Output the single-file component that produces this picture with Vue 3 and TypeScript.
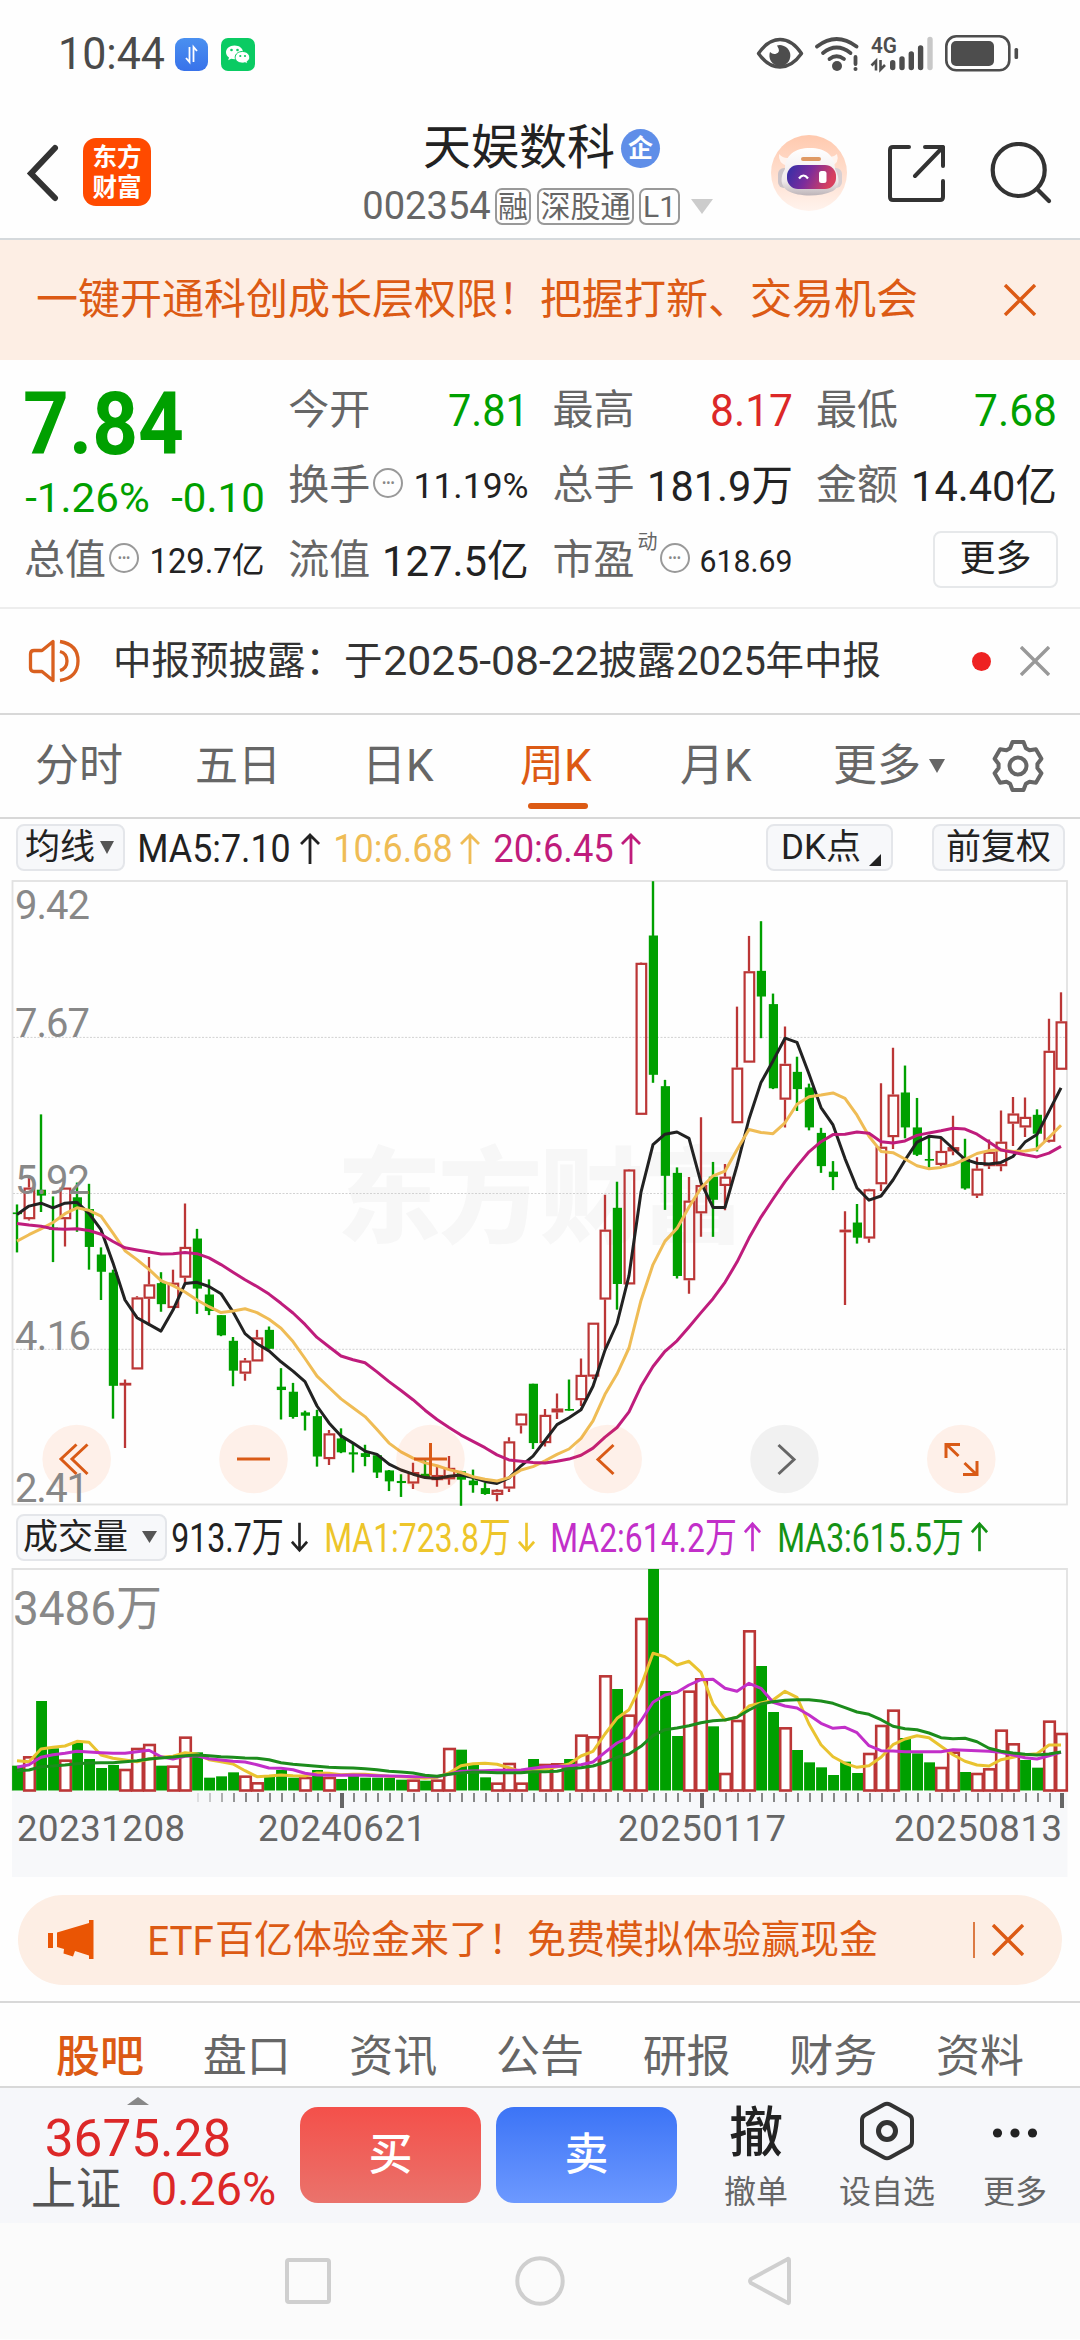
<script setup lang="ts">
import { h, type FunctionalComponent } from 'vue'

interface FitProps { t: string; w: number; size: number; weight?: number }

/* Single-line label that fills an exact width; its box is as tall as the capitals. */
const FitText: FunctionalComponent<FitProps> = (p) => {
  const cap = p.size * 0.711
  return h('svg', { width: p.w, height: cap, viewBox: `0 0 ${p.w} ${cap}`, style: 'overflow:visible;flex:none;display:block' }, [
    h('text', {
      x: -p.size * 0.045,
      y: cap,
      'font-size': p.size,
      'font-weight': p.weight ?? 400,
      fill: 'currentColor',
      textLength: p.w + p.size * 0.09,
      lengthAdjust: 'spacingAndGlyphs',
    }, p.t),
  ])
}
FitText.props = ['t', 'w', 'size', 'weight']

type Candle = [kind: 'g' | 'r', high: number, top: number, bottom: number, low: number]

const STEP = 12
const cx = (i: number): number => 17 + i * STEP
const py = (v: number): number => 870 + v / 2.376
const vy = (v: number): number => 1500 + v / 3

const candles: Candle[] = [
  ['g', 797, 816, 820, 911], ['r', 728, 757, 832, 835], ['g', 583, 762, 776, 815], ['g', 778, 852, 857, 934],
  ['r', 757, 757, 832, 897], ['g', 745, 780, 806, 862], ['g', 748, 808, 898, 952], ['g', 899, 916, 957, 1024],
  ['g', 952, 959, 1228, 1306], ['r', 1213, 1221, 1225, 1376], ['r', 1015, 1018, 1189, 1189], ['r', 922, 987, 1021, 1085],
  ['g', 958, 984, 1034, 1052], ['r', 952, 983, 1043, 1043], ['r', 795, 898, 971, 985], ['g', 855, 878, 997, 1057],
  ['g', 975, 1011, 1050, 1060], ['g', 1060, 1060, 1108, 1110], ['g', 1112, 1121, 1192, 1229], ['r', 1162, 1168, 1199, 1216],
  ['r', 1095, 1113, 1170, 1170], ['g', 1087, 1095, 1140, 1140], ['g', 1186, 1230, 1238, 1308], ['g', 1221, 1242, 1302, 1306],
  ['g', 1287, 1291, 1299, 1334], ['g', 1285, 1300, 1396, 1420], ['r', 1333, 1341, 1402, 1416], ['g', 1329, 1353, 1386, 1388],
  ['g', 1366, 1386, 1391, 1434], ['g', 1368, 1388, 1397, 1419], ['g', 1391, 1393, 1434, 1447], ['g', 1428, 1429, 1455, 1478],
  ['g', 1438, 1454, 1459, 1492], ['r', 1411, 1433, 1460, 1473], ['g', 1405, 1437, 1447, 1447], ['r', 1420, 1440, 1452, 1468],
  ['r', 1395, 1423, 1450, 1463], ['g', 1430, 1431, 1451, 1513], ['g', 1427, 1453, 1464, 1482], ['g', 1458, 1471, 1485, 1487],
  ['r', 1473, 1475, 1487, 1502], ['r', 1350, 1360, 1472, 1480], ['r', 1293, 1294, 1322, 1341], ['g', 1223, 1223, 1364, 1378],
  ['r', 1283, 1297, 1364, 1372], ['r', 1246, 1282, 1291, 1307], ['g', 1213, 1283, 1287, 1287], ['r', 1163, 1202, 1262, 1276],
  ['r', 1078, 1078, 1206, 1212], ['r', 774, 857, 1023, 1140], ['g', 743, 805, 986, 1047], ['r', 713, 714, 987, 987],
  ['r', 222, 223, 584, 584], ['g', 29, 158, 489, 508], ['g', 501, 516, 729, 810], ['g', 709, 722, 967, 973],
  ['r', 732, 788, 977, 1009], ['r', 590, 751, 818, 874], ['g', 696, 731, 786, 874], ['r', 701, 731, 753, 811],
  ['r', 327, 472, 604, 604], ['r', 159, 243, 460, 460], ['g', 124, 242, 303, 402], ['g', 296, 321, 521, 523],
  ['r', 374, 463, 548, 614], ['g', 446, 482, 523, 575], ['g', 510, 519, 614, 621], ['g', 615, 627, 706, 722],
  ['g', 694, 719, 732, 763], ['r', 813, 857, 863, 1036], ['g', 796, 840, 876, 890], ['r', 760, 761, 878, 888],
  ['r', 509, 660, 749, 765], ['r', 425, 536, 637, 665], ['g', 467, 531, 614, 640], ['g', 544, 614, 679, 682],
  ['g', 632, 689, 693, 713], ['r', 640, 670, 703, 706], ['r', 586, 661, 671, 680], ['g', 641, 688, 759, 762],
  ['r', 685, 712, 776, 782], ['r', 643, 672, 706, 713], ['r', 574, 648, 706, 718], ['r', 542, 581, 605, 658],
  ['r', 543, 589, 614, 637], ['g', 571, 584, 629, 671], ['r', 356, 432, 648, 650], ['r', 293, 362, 477, 477],
]

const volumes: number[] = [
  800, 772, 606, 748, 782, 732, 780, 807, 798, 810, 747, 735, 800, 800, 713, 760, 836, 832, 820, 830, 850, 834,
  813, 836, 834, 813, 834, 840, 826, 836, 836, 837, 842, 842, 845, 842, 747, 752, 797, 835, 851, 792, 851, 780,
  795, 793, 780, 707, 712, 529, 570, 647, 357, 210, 576, 711, 575, 538, 682, 822, 663, 394, 501, 639, 685, 753,
  790, 805, 828, 788, 822, 762, 678, 632, 717, 763, 790, 804, 758, 819, 822, 808, 692, 733, 783, 806, 665, 702,
]
/* Weeks whose turnover colour is the opposite of the candle's. */
const flipped = new Set<number>([24, 69, 84])
const volRed = (i: number): boolean => (candles[i][0] === 'r') !== flipped.has(i)

const ma5 = [
  821, 801, 794, 805, 794, 792, 818, 857, 936, 1024, 1066, 1082, 1098, 1048, 985, 982, 992, 1009, 1052, 1104, 1128, 1145,
  1171, 1193, 1218, 1276, 1316, 1347, 1364, 1383, 1391, 1414, 1428, 1438, 1446, 1448, 1443, 1440, 1446, 1455, 1460, 1447,
  1418, 1395, 1358, 1320, 1304, 1285, 1229, 1143, 1080, 966, 768, 655, 630, 625, 640, 745, 804, 804, 705, 594, 507, 456,
  402, 412, 487, 567, 608, 688, 758, 787, 777, 739, 692, 649, 635, 638, 664, 690, 699, 701, 697, 683, 649, 631, 576, 520,
]
const ma10 = [
  884, 869, 855, 840, 819, 805, 811, 825, 865, 907, 928, 951, 978, 990, 1005, 1024, 1040, 1054, 1050, 1045, 1054, 1070,
  1091, 1123, 1163, 1205, 1232, 1259, 1280, 1301, 1332, 1364, 1385, 1400, 1411, 1418, 1427, 1434, 1444, 1450, 1454, 1446,
  1428, 1420, 1406, 1391, 1378, 1353, 1311, 1248, 1200, 1138, 1025, 940, 884, 854, 803, 758, 729, 718, 667, 619, 626, 629,
  603, 559, 541, 537, 532, 545, 585, 635, 671, 674, 689, 705, 712, 709, 702, 690, 676, 669, 667, 671, 670, 665, 638, 609,
]
const ma20 = [
  842, 846, 849, 855, 856, 855, 859, 868, 885, 900, 905, 910, 915, 914, 911, 914, 924, 940, 958, 976, 992, 1010, 1032,
  1055, 1082, 1113, 1135, 1157, 1166, 1173, 1195, 1218, 1239, 1261, 1286, 1308, 1327, 1345, 1360, 1375, 1392, 1404, 1407,
  1410, 1411, 1407, 1402, 1393, 1376, 1350, 1327, 1290, 1229, 1182, 1146, 1121, 1088, 1054, 1021, 982, 934, 877, 827, 784,
  743, 706, 672, 648, 631, 630, 625, 628, 648, 651, 646, 633, 627, 622, 616, 618, 630, 649, 668, 673, 679, 684, 675, 659,
]
const vma1 = [
  785, 788, 750, 745, 741, 727, 730, 768, 778, 783, 788, 780, 775, 772, 761, 765, 782, 788, 795, 815, 833, 831, 828, 830,
  831, 822, 823, 827, 826, 826, 829, 832, 833, 835, 838, 835, 822, 800, 794, 793, 796, 806, 818, 812, 810, 803, 795, 771,
  757, 705, 658, 632, 560, 463, 473, 498, 487, 520, 615, 663, 655, 621, 612, 603, 577, 595, 675, 737, 773, 793, 805, 800,
  775, 737, 720, 710, 716, 742, 767, 787, 798, 801, 782, 775, 767, 764, 738, 738,
]
const vma2 = [
  805, 797, 775, 767, 763, 757, 759, 761, 763, 763, 758, 754, 773, 780, 772, 770, 779, 783, 787, 789, 797, 807, 808, 812,
  823, 828, 829, 829, 828, 829, 830, 831, 832, 833, 833, 833, 826, 817, 816, 815, 814, 814, 813, 808, 803, 802, 801, 797,
  789, 760, 732, 715, 665, 610, 588, 580, 558, 542, 541, 568, 577, 553, 568, 610, 621, 627, 648, 673, 688, 685, 701, 740,
  755, 756, 758, 758, 758, 758, 752, 754, 755, 757, 760, 768, 776, 780, 770, 760,
]
const vma3 = [
  815, 813, 803, 801, 798, 794, 792, 791, 791, 788, 785, 780, 777, 774, 770, 768, 770, 773, 775, 777, 778, 782, 791, 796,
  799, 802, 805, 806, 807, 809, 812, 817, 819, 822, 829, 832, 826, 822, 819, 820, 821, 821, 821, 818, 818, 817, 809, 806,
  801, 790, 775, 765, 742, 710, 692, 687, 680, 671, 665, 663, 655, 633, 615, 608, 604, 602, 602, 606, 613, 626, 639, 646,
  662, 682, 689, 692, 702, 716, 719, 718, 728, 748, 757, 762, 766, 768, 765, 759,
]
const line = (vals: number[], f: (v: number) => number): string =>
  vals.map((v, i) => `${cx(i)},${f(v).toFixed(1)}`).join(' ')

const axis = [
  { t: '9.42', y: 919.5, w: 75 }, { t: '7.67', y: 1038.3, w: 75 }, { t: '5.92', y: 1194.5, w: 75 },
  { t: '4.16', y: 1351, w: 76 }, { t: '2.41', y: 1503, w: 74 },
]
const ticks = Array.from({ length: 73 }, (_, k) => k + 15)
const major = new Set<number>([27, 57, 87])
const dates = [
  { t: '20231208', x: 17, w: 168 }, { t: '20240621', x: 258, w: 168 },
  { t: '20250117', x: 618, w: 168 }, { t: '20250813', x: 894, w: 168 },
]

const gear = Array.from({ length: 6 }, (_, k) => 30 + k * 60)
  .flatMap((a) => ([[-24, 19.5], [-13, 24.5], [13, 24.5], [24, 19.5]] as [number, number][]).map(([d, r]) => {
    const rad = ((a + d) * Math.PI) / 180
    return `${(27 + r * Math.cos(rad)).toFixed(1)},${(27 + r * Math.sin(rad)).toFixed(1)}`
  }))
  .join(' ')

const tabs = ['股吧', '盘口', '资讯', '公告', '研报', '财务', '资料']
</script>

<template>
  <div class="phone">
    <div class="status">
      <FitText t="10:44" :w="103" :size="44" />
      <svg class="st-blue" width="33" height="33" viewBox="0 0 33 33">
        <defs><linearGradient id="bl" x1="0" y1="0" x2="0" y2="1"><stop offset="0" stop-color="#4a90f0" /><stop offset="1" stop-color="#3872ea" /></linearGradient></defs>
        <rect width="33" height="33" rx="9" fill="url(#bl)" />
        <path d="M14.500 9v15l-3.500-4M18.500 24V9l3.500 4" fill="none" stroke="#fff" stroke-width="1.800" />
      </svg>
      <svg class="st-green" width="34" height="33" viewBox="0 0 34 33">
        <rect width="34" height="33" rx="7" fill="#0acb63" />
        <path d="M13.500 7.500c-5 0-8.500 3-8.500 6.800 0 2.200 1.200 4 3 5.200l-.8 2.700 3-1.500c1 .3 2 .5 3.300.5 5 0 8.500-3 8.500-6.900s-3.500-6.800-8.500-6.800z" fill="#fff" />
        <path d="M21.500 13.500c-4.300 0-7.300 2.500-7.300 5.800s3 5.800 7.300 5.800c.9 0 1.800-.1 2.600-.4l2.500 1.300-.6-2.300c1.700-1 2.700-2.600 2.700-4.400 0-3.300-3-5.800-7.200-5.800z" fill="#fff" stroke="#0acb63" stroke-width="1" />
        <g fill="#0acb63"><circle cx="10.500" cy="12" r="1.300" /><circle cx="16.500" cy="12" r="1.300" /><circle cx="19.300" cy="18" r="1.100" /><circle cx="24" cy="18" r="1.100" /></g>
      </svg>
      <svg class="st-right" width="264" height="44" viewBox="756 32 264 44">
        <path d="M758.500 53.500Q768 39.500 780 39.500T801.500 53.500Q792 67 780 67T758.500 53.500z" fill="none" stroke="#4d4d4d" stroke-width="3.400" stroke-linejoin="round" />
        <path d="M777 45.500a10.500 10.500 0 1 1-7 6.500q3 3 6.500 1.500t2-5z" fill="#4d4d4d" />
        <g fill="none" stroke="#4d4d4d" stroke-width="3.800" stroke-linecap="round">
          <path d="M817 46.500Q836.500 31.500 856.500 46.500" /><path d="M823 53Q836.500 42 850.500 53" /><path d="M829.500 59Q836.500 53.500 844 59" />
          <path d="M855.500 57v7" />
        </g>
        <circle cx="837" cy="66" r="5" fill="#4d4d4d" /><circle cx="855.500" cy="69" r="2" fill="#4d4d4d" />
        <text x="871" y="53" font-size="22.500" font-weight="600" textLength="26" lengthAdjust="spacingAndGlyphs" fill="#4d4d4d">4G</text>
        <path d="M871.500 65.500l4.500-4.500v9.500M880.500 60v9.500l4.500-4.500" fill="none" stroke="#4d4d4d" stroke-width="2.600" />
        <g stroke="#4d4d4d" stroke-width="5.400" stroke-linecap="round"><path d="M892.700 62.700v4.800M902 59v8.500M911.300 54v13.500M920.600 48v19.500" /><path d="M930 39.500v28" stroke="#c8c8c8" /></g>
        <rect x="946.300" y="36.300" width="63" height="34" rx="10" fill="none" stroke="#4d4d4d" stroke-width="2.600" />
        <rect x="951" y="41" width="43" height="25" rx="5" fill="#4d4d4d" />
        <rect x="1014.500" y="48" width="3.600" height="11" rx="1.500" fill="#4d4d4d" />
      </svg>
    </div>

    <header class="head">
      <svg class="back" width="34" height="58" viewBox="0 0 34 58"><path d="M29 4L5 29.500 29 54" fill="none" stroke="#333" stroke-width="6" stroke-linecap="round" stroke-linejoin="miter" /></svg>
      <div class="logo"><span>东方</span><span>财富</span></div>
      <div class="title">
        <div class="t1"><span>天娱数科</span><i class="ent">企</i></div>
        <div class="t2">
          <FitText t="002354" :w="125" :size="38" />
          <b class="tag rong">融</b><b class="tag sgt">深股通</b><b class="tag l1">L1</b>
          <svg width="22" height="15" viewBox="0 0 22 15"><path d="M0 0h22L11 15z" fill="#ccc" /></svg>
        </div>
      </div>
      <svg class="avatar" width="76" height="76" viewBox="0 0 76 76">
        <defs>
          <linearGradient id="av" x1="0" y1="0" x2="0" y2="1"><stop offset="0" stop-color="#ffc9ae" /><stop offset="1" stop-color="#fff3ed" /></linearGradient>
          <linearGradient id="vs" x1="0" y1="0" x2="1" y2=".25"><stop offset="0" stop-color="#2f2fa8" /><stop offset=".5" stop-color="#7a2c9c" /><stop offset="1" stop-color="#d8405f" /></linearGradient>
          <linearGradient id="hd" x1="0" y1="0" x2="0" y2="1"><stop offset="0" stop-color="#fff" /><stop offset=".7" stop-color="#efe9ea" /><stop offset="1" stop-color="#bdb4b8" /></linearGradient>
        </defs>
        <circle cx="38" cy="38" r="38" fill="url(#av)" />
        <path d="M8 19q-1 9 8 12l8-10q-10 5-16-2zM66 19q3 9-6 12l-7-10q8 3 13-2z" fill="#fff4ef" />
        <rect x="7" y="33" width="12" height="20" rx="6" fill="#cbc3c8" /><rect x="59" y="33" width="12" height="20" rx="6" fill="#d8cfd2" />
        <path d="M14 34C14 20 24 13 39 13s25 7 25 21c5 9 5 18-2 22-13 6-34 6-45 0-8-5-8-14-3-22z" fill="url(#hd)" />
        <rect x="30" y="22" width="20" height="4" rx="2" fill="#df9a65" />
        <rect x="16" y="30" width="49" height="24" rx="11" fill="url(#vs)" />
        <path d="M28 43.500q4.500-6 9 0" fill="none" stroke="#fff" stroke-width="2.200" /><rect x="48" y="36" width="7.500" height="12" rx="2.500" fill="#fff" />
      </svg>
      <svg class="share" width="57" height="57" viewBox="0 0 57 57" fill="none" stroke="#333" stroke-width="4" stroke-linecap="round" stroke-linejoin="round"><path d="M21 2H5Q2 2 2 5v47q0 3 3 3h47q3 0 3-3V36M37 2h18v19M55 2L27 31" /></svg>
      <svg class="search" width="64" height="62" viewBox="0 0 64 62" fill="none" stroke="#333" stroke-width="4.200" stroke-linecap="round"><circle cx="28.700" cy="28" r="26" /><path d="M47 47l12 12" /></svg>
    </header>

    <div class="banner">
      <span>一键开通科创成长层权限！把握打新、交易机会</span>
      <svg width="34" height="32" viewBox="0 0 34 32"><path d="M2 1l30 30M32 1L2 31" stroke="#dc5a14" stroke-width="3.400" /></svg>
    </div>

    <section class="quote">
      <div class="cell drop green"><FitText t="7.84" :w="153" :size="88" :weight="700" /></div>
      <div class="cell"><span class="lb">今开</span><FitText class="end green" t="7.81" :w="77" :size="43.500" /></div>
      <div class="cell"><span class="lb">最高</span><FitText class="end red" t="8.17" :w="79" :size="43.500" /></div>
      <div class="cell"><span class="lb">最低</span><FitText class="end green" t="7.68" :w="79" :size="43.500" /></div>

      <div class="cell drop green"><FitText t="-1.26%" :w="121" :size="41" /><FitText class="end" t="-0.10" :w="90" :size="41" /></div>
      <div class="cell"><span class="lb">换手</span><i class="dots">•••</i><FitText class="end" t="11.19%" :w="112" :size="35" /></div>
      <div class="cell"><span class="lb">总手</span><FitText class="end" t="181.9万" :w="142" :size="43" /></div>
      <div class="cell"><span class="lb">金额</span><FitText class="end" t="14.40亿" :w="142" :size="43" /></div>

      <div class="cell"><span class="lb first">总值</span><i class="dots">•••</i><FitText class="end" t="129.7亿" :w="112" :size="35" /></div>
      <div class="cell"><span class="lb">流值</span><FitText class="end" t="127.5亿" :w="143" :size="43" /></div>
      <div class="cell"><span class="lb">市盈</span><sup class="dyn">动</sup><i class="dots pe">•••</i><FitText class="end" t="618.69" :w="90" :size="32" /></div>
      <div class="cell"><span class="more">更多</span></div>
    </section>

    <div class="notice">
      <svg width="54" height="46" viewBox="0 0 54 46" fill="none" stroke="#d9601f" stroke-width="3.300" stroke-linejoin="round"><path d="M25 3.500v39L14 33.500H6q-3.500 0-3.500-3.500V16q0-3.500 3.500-3.500h8z" /><path d="M32 13.500q7 2 7 9.500t-7 9.500M32 3.500q18 3 18 19.500T32 42.500" /></svg>
      <span class="nt">中报预披露：于</span><FitText t="2025-08-22" :w="212" :size="40" /><span class="nt mid">披露</span><FitText t="2025" :w="86" :size="40" /><span class="nt mid">年中报</span>
      <i class="reddot"></i>
      <svg width="30" height="30" viewBox="0 0 30 30"><path d="M1 1l28 28M29 1L1 29" stroke="#999" stroke-width="3.400" /></svg>
    </div>

    <nav class="periods">
      <span class="p p1">分时</span><span class="p p2">五日</span><span class="p">日K</span>
      <span class="p p4 on">周K</span><span class="p">月K</span><span class="p p6">更多<svg width="16" height="14" viewBox="0 0 16 14"><path d="M0 0h16L8 14z" fill="#666" /></svg></span>
      <svg class="gear" width="54" height="54" viewBox="0 0 54 54" fill="none" stroke="#666" stroke-width="4" stroke-linejoin="round"><polygon :points="gear" /><circle cx="27" cy="27" r="8.500" /></svg>
    </nav>

    <div class="mas">
      <span class="chip c1">均线<svg width="14" height="13" viewBox="0 0 14 13"><path d="M0 0h14L7 13z" fill="#555" /></svg></span>
      <FitText class="dark" t="MA5:7.10" :w="150" :size="38" /><svg class="arr dark" viewBox="0 0 20 32"><path d="M10 31V2M1 11l9-9 9 9" /></svg>
      <FitText class="gold m1" t="10:6.68" :w="116" :size="38" /><svg class="arr gold" viewBox="0 0 20 32"><path d="M10 31V2M1 11l9-9 9 9" /></svg>
      <FitText class="plum m2" t="20:6.45" :w="117" :size="38" /><svg class="arr plum" viewBox="0 0 20 32"><path d="M10 31V2M1 11l9-9 9 9" /></svg>
      <span class="chip c2">DK点<svg width="12" height="12" viewBox="0 0 12 12"><path d="M12 0v12H0z" fill="#222" /></svg></span>
      <span class="chip c3">前复权</span>
    </div>

    <svg class="chart" width="1080" height="635" viewBox="0 875 1080 635">
      <text x="337" y="1236" font-size="104" font-weight="900" textLength="408" fill="#f7f7f7">东方财富</text>
      <rect x="12.500" y="882" width="1054.500" height="623.500" fill="none" stroke="#e2e2e2" stroke-width="1.800" />
      <g stroke="#d2d2d2" stroke-width="1" stroke-dasharray="2 1.500"><path d="M13 1038.400h1054M13 1194.500h1054M13 1350.300h1054" /></g>
      <g v-for="(c, i) in candles" :key="i">
        <template v-if="c[0] === 'g'">
          <path :d="`M${cx(i)} ${py(c[1])}V${py(c[4])}`" stroke="#00a000" stroke-width="2.400" />
          <rect :x="cx(i) - 4.2" :y="py(c[2])" width="9.200" :height="py(c[3]) - py(c[2])" fill="#00a000" />
        </template>
        <template v-else>
          <path :d="`M${cx(i)} ${py(c[1])}V${py(c[2])}M${cx(i)} ${py(c[3])}V${py(c[4])}`" stroke="#bb3636" stroke-width="2.300" />
          <rect :x="cx(i) - 4.4" :y="py(c[2]) + 1" width="9.600" :height="Math.max(0.6, py(c[3]) - py(c[2]) - 2)" fill="none" stroke="#bb3636" stroke-width="2.200" />
        </template>
      </g>
      <g fill="none" stroke-width="3" stroke-linejoin="round">
        <polyline :points="line(ma5, py)" stroke="#222" /><polyline :points="line(ma10, py)" stroke="#efbc55" /><polyline :points="line(ma20, py)" stroke="#bf1c7c" />
      </g>
      <g fill="#ff5a0a" fill-opacity=".085">
        <circle cx="76.700" cy="1460" r="34.300" /><circle cx="253.500" cy="1460" r="34.300" /><circle cx="430.500" cy="1460" r="34.300" /><circle cx="607.700" cy="1460" r="34.300" />
        <circle cx="784.500" cy="1460" r="34.300" fill="#000" fill-opacity=".05" /><circle cx="961.300" cy="1460" r="34.300" />
      </g>
      <g fill="none" stroke="#d95a16" stroke-width="3">
        <path d="M76.500 1445.500L61 1460l15.500 15M87.500 1445.500L72 1460l15.500 15M237 1460h33M414 1460h33M430.500 1444v32.500M613.500 1446l-15.500 14.500 15.500 14.500" />
        <path d="M778.500 1446l15.500 14.500-15.500 14.500" stroke="#666" />
        <path d="M946 1459v-13.500h14M946.500 1445.500l12 11.500M977 1462v13.500h-14M976.500 1475.500l-12-11.500" />
      </g>
      <text v-for="a in axis" :key="a.t" x="15" :y="a.y" font-size="40" :textLength="a.w" fill="#888">{{ a.t }}</text>
    </svg>

    <div class="vols">
      <span class="chip c4">成交量<svg width="15" height="12" viewBox="0 0 15 12"><path d="M0 0h15L7.500 12z" fill="#555" /></svg></span>
      <FitText class="dark" t="913.7万" :w="109" :size="40.500" /><svg class="arr dark" viewBox="0 0 20 32"><path d="M10 1v29M2 21l8 9 8-9" /></svg>
      <FitText class="yel v1" t="MA1:723.8万" :w="183" :size="40.500" /><svg class="arr yel" viewBox="0 0 20 32"><path d="M10 1v29M2 21l8 9 8-9" /></svg>
      <FitText class="mag v2" t="MA2:614.2万" :w="183" :size="40.500" /><svg class="arr mag" viewBox="0 0 20 32"><path d="M10 31V2M2 11l8-9 8 9" /></svg>
      <FitText class="grn v3" t="MA3:615.5万" :w="183" :size="40.500" /><svg class="arr grn" viewBox="0 0 20 32"><path d="M10 31V2M2 11l8-9 8 9" /></svg>
    </div>

    <svg class="chart" width="1080" height="312" viewBox="0 1566 1080 312">
      <rect x="12" y="1792" width="1055.500" height="86" fill="#f7f8fa" />
      <path d="M12.500 1792V1570H1067v222" fill="none" stroke="#e2e2e2" stroke-width="1.800" />
      <template v-for="(v, i) in volumes" :key="i">
        <rect v-if="volRed(i)" :x="cx(i) - 4.8" :y="vy(v) + 1" width="10.600" :height="1790.500 - vy(v)" fill="#fff" stroke="#bb3636" stroke-width="2.600" />
        <rect v-else :x="cx(i) - 4.9" :y="vy(v)" width="10.900" :height="1791.500 - vy(v)" fill="#00a000" />
      </template>
      <g fill="none" stroke-width="3" stroke-linejoin="round">
        <polyline :points="line(vma1, vy)" stroke="#e9c330" /><polyline :points="line(vma2, vy)" stroke="#c22fc9" /><polyline :points="line(vma3, vy)" stroke="#1c8c1c" />
      </g>
      <path v-for="k in ticks" :key="k" :d="`M${cx(k) + 1} 1794V${major.has(k) ? 1809 : 1803}`" :stroke="major.has(k) ? '#666' : '#888'" :stroke-width="major.has(k) ? 4 : 2" :stroke-opacity="k < 19 ? (k - 14) * 0.22 : 1" />
      <text x="13" y="1626" font-size="48" textLength="149" lengthAdjust="spacingAndGlyphs" fill="#888">3486万</text>
      <text v-for="d in dates" :key="d.t" :x="d.x" y="1841.500" font-size="36.500" :textLength="d.w" fill="#666">{{ d.t }}</text>
    </svg>

    <div class="promo">
      <svg class="horn" width="47" height="40" viewBox="0 0 47 40" fill="#ea5504"><path d="M0 13h5v15H0zM9 12.500L41 3V0h4.500v39H41v-3.500L27 31l-2 5.500-9.500-3 .5-4.500-7-2z" /></svg>
      <FitText t="ETF" :w="63" :size="40.500" /><span>百亿体验金来了！免费模拟体验赢现金</span>
      <i class="bar"></i>
      <svg width="34" height="32" viewBox="0 0 34 32"><path d="M2 1l30 30M32 1L2 31" stroke="#dc5a14" stroke-width="3.400" /></svg>
    </div>

    <nav class="tabs"><span v-for="(t, i) in tabs" :key="t" :class="{ on: i === 0 }">{{ t }}</span></nav>

    <footer class="dock">
      <div class="index">
        <svg class="up" width="22" height="8" viewBox="0 0 22 8"><path d="M0 8h22L11 0z" fill="#888" /></svg>
        <div class="ix1 red"><FitText t="3675.28" :w="182" :size="52" /></div>
        <div class="ix2"><span>上证</span><FitText class="red" t="0.26%" :w="121" :size="47" /></div>
      </div>
      <button class="buy">买</button><button class="sell">卖</button>
      <div class="act a1"><b>撤</b><span>撤单</span></div>
      <div class="act a2">
        <svg width="56" height="60" viewBox="0 0 56 60" fill="none" stroke="#333" stroke-linejoin="round"><path d="M25 3.500q3-1.700 6 0l19 10.500q3 1.700 3 5v22q0 3.300-3 5L31 56.500q-3 1.700-6 0L6 46q-3-1.700-3-5V19q0-3.300 3-5z" stroke-width="4" /><circle cx="28" cy="30" r="8.500" stroke-width="5" /></svg>
        <span>设自选</span>
      </div>
      <div class="act a3">
        <svg width="46" height="60" viewBox="0 0 46 60" fill="#222"><circle cx="5.500" cy="32" r="4.600" /><circle cx="23" cy="32" r="4.600" /><circle cx="40.500" cy="32" r="4.600" /></svg>
        <span>更多</span>
      </div>
    </footer>

    <div class="keys">
      <svg width="46" height="46" viewBox="0 0 46 46"><rect x="2" y="2" width="42" height="42" rx="2" /></svg>
      <svg width="50" height="50" viewBox="0 0 50 50"><circle cx="25" cy="25" r="22.700" /></svg>
      <svg width="44" height="50" viewBox="0 0 44 50"><path d="M41 4v42q0 2-2 .5L3 27q-2-2 0-4L39 3.500q2-1.500 2 .5z" stroke-linejoin="round" /></svg>
    </div>
  </div>
</template>

<style>
body { background: #fff; }
</style>

<style scoped>
.phone { width: 1080px; height: 2340px; overflow: hidden; box-sizing: border-box; background: #fefefe; color: #333; font-family: Roboto, "Noto Sans CJK SC", sans-serif; line-height: 1; }
.phone * { box-sizing: border-box; }
.phone span, .phone b, .phone i { font-style: normal; font-weight: 400; white-space: nowrap; flex: none; }
svg { flex: none; display: block; }
.green { color: #00a000; }
.red { color: #dc2828; }
.end { margin-left: auto; }

.status { height: 108px; display: flex; align-items: center; padding-left: 60px; color: #4a4a4a; }
.st-blue { margin-left: 12px; }
.st-green { margin-left: 13px; }
.st-right { margin-left: 501px; }

.head { height: 132px; border-bottom: 2px solid #d5d9dc; display: flex; align-items: center; }
.back { margin-left: 26px; }
.logo { width: 68px; height: 68px; margin-left: 23px; border-radius: 13px; background: #ff4a00; color: #fff; display: flex; flex-direction: column; align-items: center; justify-content: center; gap: 3px; margin-top: -2px; }
.phone .logo span { font-size: 24.500px; line-height: 27px; font-weight: 700; }
.title { align-self: flex-start; width: 348px; margin-left: 213px; }
.t1 { height: 80px; padding-left: 59px; display: flex; align-items: center; font-size: 48px; color: #222; }
.phone .ent { width: 39px; height: 39px; margin-left: 6px; border-radius: 50%; background: #5f8ee8; color: #fff; font-size: 25px; font-weight: 700; line-height: 39px; text-align: center; }
.t2 { height: 36px; display: flex; align-items: center; color: #666; }
.tag { height: 37px; border: 2px solid #999; border-radius: 7px; font-size: 30px; line-height: 34px; text-align: center; }
.rong { width: 36px; margin-left: 6px; }
.sgt { width: 97px; margin-left: 6px; }
.l1 { width: 41px; margin-left: 5px; margin-right: 11px; }
.avatar { margin-left: 59px; }
.share { margin-left: 41px; }
.search { margin-left: 45px; }

.banner { height: 120px; background: #fdeee4; color: #dc5a14; display: flex; align-items: center; padding: 0 43px 0 36px; justify-content: space-between; font-size: 42px; }

.quote { height: 249px; padding: 13px 25px 0 27px; border-bottom: 2px solid #ededed; display: grid; grid-template-columns: 236px 238px 237px 238px; column-gap: 26.300px; grid-auto-rows: 75px; color: #222; }
.cell { display: flex; align-items: center; height: 75px; }
.drop { padding-top: 24px; }
.lb { font-size: 41px; color: #666; margin-left: -1px; }
.lb.first { margin-left: -3px; }
.dots { width: 30px; height: 30px; margin-left: 3px; margin-top: -5px; border: 2px solid #999; border-radius: 50%; color: #888; font-size: 12.500px; line-height: 26px; text-align: center; }
.dyn { font-size: 20px; color: #666; align-self: flex-start; margin-top: 9px; margin-left: 3px; line-height: 20px; }
.pe { margin-left: 2px; }
.more { margin-left: auto; margin-right: -3px; width: 125px; height: 57px; border: 2px solid #e6e8ea; border-radius: 8px; text-align: center; font-size: 36px; line-height: 53px; margin-top: -3px; color: #222; }

.notice { height: 106px; border-bottom: 2px solid #d8d8d8; display: flex; align-items: center; padding-left: 28px; color: #333; }
.nt { font-size: 38.500px; margin-left: 31px; }
.nt + svg { margin-left: 2px; }
.nt.mid { margin-left: 2px; }
.reddot { width: 19px; height: 19px; border-radius: 50%; background: #ee2222; margin-left: auto; }
.reddot + svg { margin: 0 30px 0 29px; }

.periods { height: 104px; border-bottom: 2px solid #d8d8d8; display: grid; grid-template-columns: 195px 167px 158px 160px 153px 158px 1fr; align-items: center; font-size: 44px; color: #666; }
.p { height: 102px; line-height: 103px; }
.p1 { padding-left: 35px; }
.p2 { font-size: 43px; }
.p4.on { color: #dc5a14; position: relative; }
.p4::after { content: ""; position: absolute; left: 8px; bottom: 8px; width: 60px; height: 6px; border-radius: 3px; background: #dc5a14; }
.p6 { display: flex; align-items: center; gap: 8px; }

.mas { height: 55px; display: flex; align-items: center; padding: 5px 15px 0 16px; }
.vols { height: 56px; display: flex; align-items: center; padding-left: 16px; }
.chip { height: 47px; border: 2px solid #e4e6ea; border-radius: 8px; background: #f7f8fa; color: #222; font-size: 35px; display: flex; align-items: center; line-height: 43px; margin-top: -3px; }
.c1 { width: 109px; padding-left: 7px; gap: 5px; margin-right: 14px; }
.c2 { width: 127px; padding-left: 13px; margin-left: auto; gap: 8px; }
.c2 svg { margin-top: 24px; }
.c3 { width: 133px; padding-left: 12px; margin-left: 39px; }
.c4 { width: 151px; padding-left: 5px; gap: 14px; margin-right: 6px; margin-top: 0; }
.arr { width: 20px; height: 32px; fill: none; stroke: currentColor; stroke-width: 2.800; margin-left: 11px; }
.vols .arr { margin-left: 8px; width: 19px; }
.dark { color: #222; }
.gold { color: #efbc55; }
.plum { color: #bf1c7c; }
.yel { color: #edc52a; }
.mag { color: #c22fc9; }
.grn { color: #159215; }
.m1 { margin-left: 15px; }
.mas .arr.gold, .mas .arr.plum { margin-left: 9px; }
.m2 { margin-left: 15px; }
.v1, .v2, .v3 { margin-left: 16.500px; }

.chart { overflow: visible; }

.promo { width: 1044px; height: 90px; margin: 18px 0 0 18px; border-radius: 45px; background: #fdeee4; color: #dc5a14; display: flex; align-items: center; padding-left: 30px; font-size: 39px; }
.horn { margin-right: 54px; }
.promo span { margin-left: 3px; }
.bar { width: 2px; height: 36px; background: #dc7a44; margin-left: auto; margin-right: 16px; }
.bar + svg { margin-right: 37px; }

.tabs { height: 87px; margin-top: 16px; border-top: 2px solid #d8d8d8; border-bottom: 2px solid #d8d8d8; display: flex; justify-content: space-between; padding: 20px 56px 0 56px; font-size: 44px; line-height: 68px; color: #666; }
.phone .tabs .on { color: #dc5a14; font-weight: 500; }

.dock { height: 135px; background: #f6f7fa; display: flex; }
.index { width: 300px; display: flex; flex-direction: column; }
.up { margin: 9px 0 0 127px; }
.ix1 { height: 64px; padding-left: 47px; display: flex; align-items: center; }
.ix2 { height: 36px; padding-left: 31px; margin-top: 2px; display: flex; align-items: center; gap: 32px; color: #555; font-size: 45px; }
.buy, .sell { width: 181px; height: 96px; margin: 19px 0 0; border: 0; border-radius: 18px; color: #fff; font: 500 44px/94px Roboto, "Noto Sans CJK SC", sans-serif; padding: 0; background: linear-gradient(#f4504a, #ea736c); }
.sell { margin-left: 15px; background: linear-gradient(#3c74f6, #6d99ff); }
.act { display: flex; flex-direction: column; align-items: center; color: #666; font-size: 32px; padding-top: 13px; }
.act svg, .act b { height: 60px; }
.phone .act b { font-size: 54px; line-height: 66px; color: #222; font-weight: 500; }
.act span { line-height: 37px; margin-top: 13px; }
.a1 { width: 64px; margin-left: 47px; }
.a2 { width: 96px; margin-left: 51px; }
.a3 { width: 64px; margin-left: 48px; }

.keys { height: 116px; background: #fbfbfb; display: flex; align-items: center; justify-content: space-between; padding: 0 288px 0 285px; }
.keys svg { fill: none; stroke: #cfcfcf; stroke-width: 4; }
</style>
